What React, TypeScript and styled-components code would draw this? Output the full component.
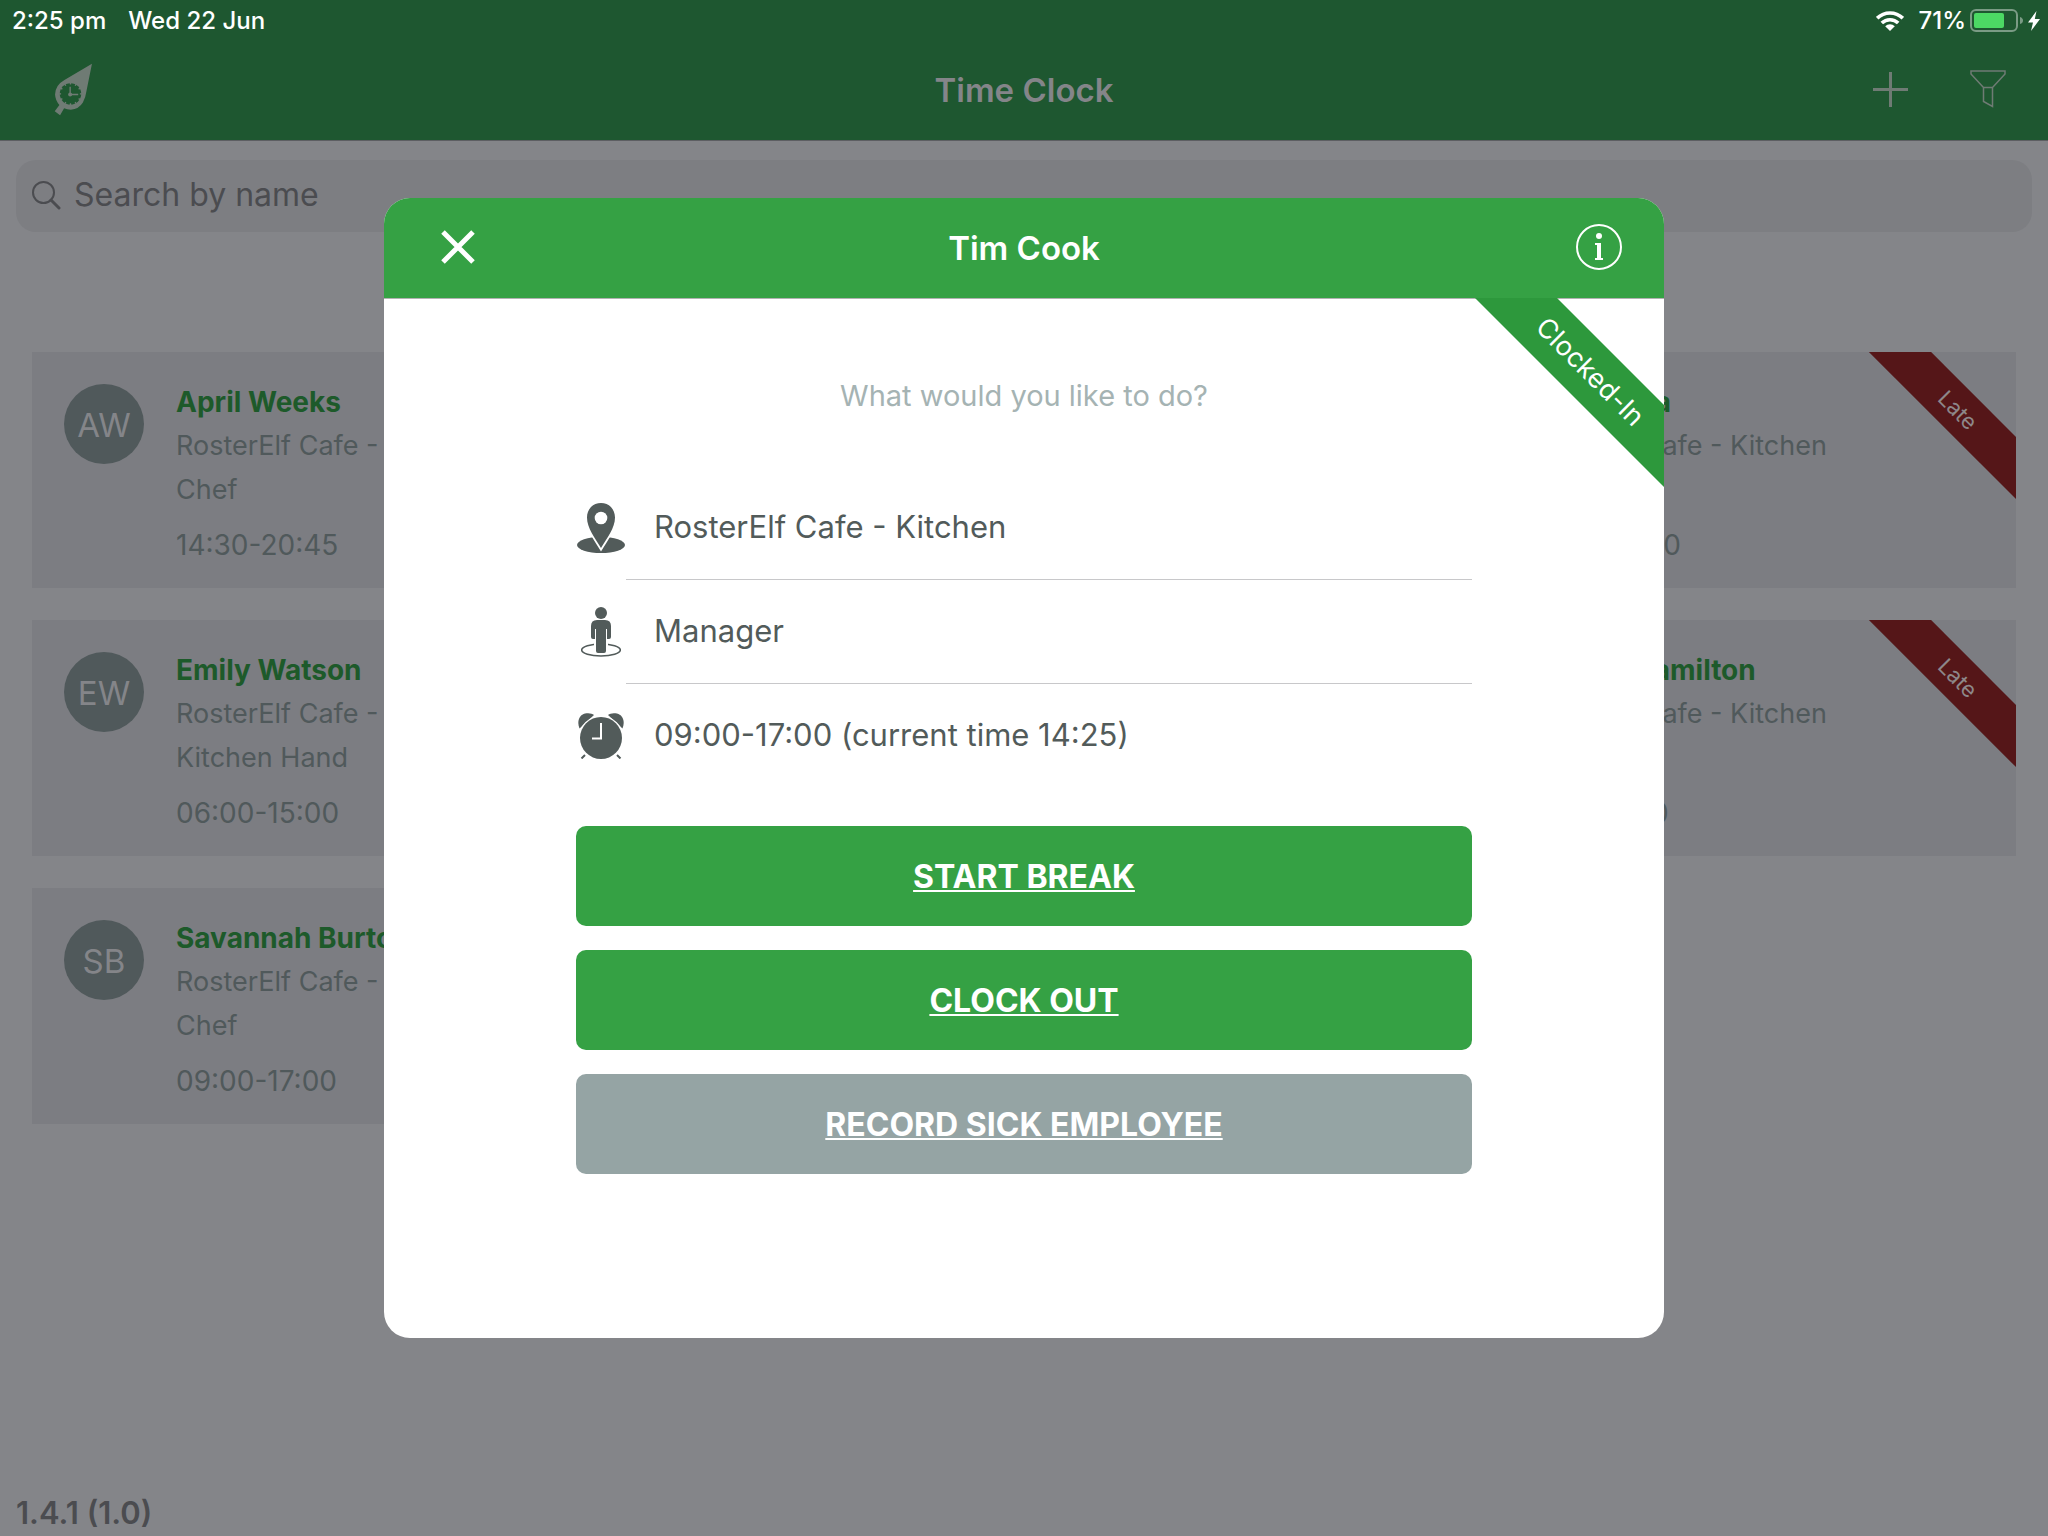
import React from 'react';
import styled, { createGlobalStyle } from 'styled-components';

const color = {
  header: '#1e5730',
  page: '#848589',
  search: '#7d7e82',
  card: '#7c7d82',
  slate: '#50595b',
  dimGreen: '#1d5a2a',
  dimText: '#4b4c50',
  dimWhite: '#848589',
  late: '#551618',
  green: '#35a144',
  ribbon: '#2d983c',
  grey: '#95a4a4',
  ink: '#525b5a',
};

const GlobalStyle = createGlobalStyle`
  *, *::before, *::after { box-sizing: border-box; }
  body {
    margin: 0;
    background: ${color.page};
    font-family: Inter, "Liberation Sans", sans-serif;
  }
  h1, h2, h3, p, ul, dl { margin: 0; padding: 0; }
  button, input { font: inherit; color: inherit; border: 0; padding: 0; background: none; }
  button { cursor: pointer; }
  svg { display: block; flex: none; }
`;

const Page = styled.div`
  min-height: 100vh;
  display: flex;
  flex-direction: column;
`;

const TopBar = styled.header`
  background: ${color.header};
  border-bottom: 1px solid #5d5e62;
`;

const StatusBar = styled.div`
  height: 40px;
  padding: 2px 8px 0 12px;
  display: flex;
  align-items: center;
  justify-content: space-between;
  color: #fff;
  font-size: 24px;
  font-weight: 500;
  line-height: 32px;
`;

const StatusGroup = styled.div<{ $gap: number }>`
  display: flex;
  align-items: center;
  gap: ${(p) => p.$gap}px;
`;

const NavBar = styled.div`
  height: 100px;
  padding: 0 42px;
  display: grid;
  grid-template-columns: 1fr auto 1fr;
  align-items: center;
`;

const AppNav = styled(NavBar)`
  color: #6f7b74;
`;

const DialogNav = styled(NavBar)`
  background: ${color.green};
  color: #fff;
`;

const NavStart = styled.div<{ $inset: number }>`
  padding: 0 0 2px ${(p) => p.$inset}px;
  display: flex;
`;

const NavEnd = styled.div`
  padding-bottom: 2px;
  display: flex;
  justify-content: flex-end;
  align-items: center;
  gap: 62px;
`;

const IconButton = styled.button`
  display: flex;
  align-items: center;
  justify-content: center;
`;

const Title = styled.h1<{ $color: string }>`
  font-size: 33px;
  line-height: 44px;
  font-weight: 600;
  color: ${(p) => p.$color};
`;

const Main = styled.main`
  flex: 1;
  display: flex;
  flex-direction: column;
`;

const SearchBox = styled.label`
  margin: 19px 16px 0;
  height: 72px;
  padding: 0 16px 2px;
  display: flex;
  align-items: center;
  gap: 13px;
  border-radius: 20px;
  background: ${color.search};
  color: ${color.dimText};
`;

const SearchInput = styled.input`
  flex: 1;
  font-size: 32px;
  line-height: 44px;
  outline: none;
  &::placeholder { color: ${color.dimText}; opacity: 1; }
`;

const Roster = styled.ul`
  list-style: none;
  margin-top: 120px;
  padding: 0 32px;
  display: grid;
  grid-template-columns: repeat(3, 1fr);
  gap: 32px;
`;

const Card = styled.li<{ $column: number }>`
  grid-column: ${(p) => p.$column};
  position: relative;
  overflow: hidden;
  display: flex;
  gap: 32px;
  padding: 28px 32px 21px;
  background: ${color.card};
  color: ${color.slate};
  font-size: 27px;
  line-height: 44px;
`;

const Avatar = styled.span`
  flex: none;
  width: 80px;
  height: 80px;
  margin-top: 4px;
  padding-top: 2px;
  display: flex;
  align-items: center;
  justify-content: center;
  border-radius: 50%;
  background: ${color.slate};
  color: ${color.dimWhite};
  font-size: 33px;
`;

const Name = styled.h3`
  font-size: 28px;
  font-weight: 700;
  color: ${color.dimGreen};
`;

const Hours = styled.p`
  margin-top: 11px;
  font-size: 28px;
`;

/* A diagonal band over the top right corner, centred `$inset` px from both edges. */
const Ribbon = styled.span<{ $inset: number; $thick: number; $size: number; $bg: string; $fg: string }>`
  position: absolute;
  top: ${(p) => p.$inset - p.$thick / 2}px;
  right: ${(p) => p.$inset - 160}px;
  width: 320px;
  transform: rotate(45deg);
  text-align: center;
  line-height: ${(p) => p.$thick}px;
  font-size: ${(p) => p.$size}px;
  background: ${(p) => p.$bg};
  color: ${(p) => p.$fg};
`;

const Version = styled.footer`
  padding: 0 16px 3px;
  font-size: 31px;
  line-height: 40px;
  font-weight: 600;
  color: ${color.dimText};
`;

const Overlay = styled.div`
  position: fixed;
  inset: 0;
  display: flex;
  align-items: center;
  justify-content: center;
`;

const Dialog = styled.section`
  width: 100%;
  max-width: 1280px;
  border-radius: 26px;
  overflow: hidden;
  background: #fff;
`;

const DialogBody = styled.div`
  position: relative;
  overflow: hidden;
  padding: 78px 15% 164px;
  box-shadow: inset 0 1px 0 #b2b2b2;
`;

const Prompt = styled.p`
  text-align: center;
  font-size: 29px;
  line-height: 40px;
  color: #a5b3b3;
`;

const Details = styled.ul`
  list-style: none;
  margin: 60px 0 38px;
  color: ${color.ink};
`;

const Detail = styled.li`
  display: flex;
  align-items: center;
`;

const DetailIcon = styled.span`
  width: 50px;
  display: flex;
  justify-content: center;
`;

const DetailText = styled.span`
  flex: 1;
  height: 104px;
  padding: 0 0 3px 28px;
  display: flex;
  align-items: center;
  font-size: 31px;
  border-bottom: 1px solid #c8c8ca;
  ${Detail}:last-child & { border-bottom-color: transparent; }
`;

const Actions = styled.div`
  display: flex;
  flex-direction: column;
  gap: 24px;
`;

const Action = styled.button<{ $bg: string }>`
  height: 100px;
  border-radius: 10px;
  background: ${(p) => p.$bg};
  color: #fff;
  font-size: 32px;
  font-weight: 700;
  text-decoration: underline;
  text-decoration-thickness: 2px;
  text-underline-offset: 2px;
  text-decoration-skip-ink: none;
`;

const WifiIcon = () => (
  <svg width="28" height="20" viewBox="0 0 28 20" fill="none" stroke="#fff" strokeWidth="3.6">
    <path d="M1.2 7.2A18.4 18.4 0 0 1 26.8 7.2" />
    <path d="M5.8 12A11.8 11.8 0 0 1 22.2 12" />
    <path d="M14 20L9.2 15.3A6.8 6.8 0 0 1 18.8 15.3Z" fill="#fff" stroke="none" />
  </svg>
);

const BatteryIcon = () => (
  <svg width="54" height="24" viewBox="0 0 54 24">
    <rect x="1" y="1" width="46" height="21" rx="5" fill="none" stroke="#7b9b85" strokeWidth="2" />
    <rect x="4" y="4" width="30" height="15" rx="2" fill="#4cd964" />
    <path d="M50 8Q53 9 53 11.500Q53 14 50 15Z" fill="#7b9b85" />
  </svg>
);

const BoltIcon = () => (
  <svg width="12" height="20" viewBox="0 0 12 20" fill="#fff">
    <path d="M8.500 0L0 11.500H5L3 20L12 8H6.800Z" />
  </svg>
);

const LeafClockIcon = () => (
  <svg width="39" height="53" viewBox="162 190 116 158">
    <path
      fill="currentColor"
      d="M275 192L193 241Q166 256 165 284Q166 302 178 315L164 334L180 346L192 325Q201 329 212 329Q236 328 248 308Q256 294 259 272Z"
    />
    <circle cx="211" cy="282" r="32" fill={color.header} />
    <g stroke="currentColor" strokeWidth="4">
      {[0, 30, 60, 90, 120, 150, 180, 210, 240, 270, 300, 330].map((a) => (
        <path key={a} d="M211 248V254" transform={`rotate(${a} 211 282)`} />
      ))}
      <path d="M210 261V284M208 284H234" />
    </g>
    <circle cx="210" cy="284" r="6" fill="currentColor" />
  </svg>
);

const PlusIcon = () => (
  <svg width="35" height="35" viewBox="0 0 35 35" stroke="currentColor" strokeWidth="3">
    <path d="M17.500 0V35M0 17.500H35" />
  </svg>
);

const FilterIcon = () => (
  <svg width="36" height="38" viewBox="0 0 36 38" fill="none" stroke="currentColor" strokeWidth="1.500">
    <path d="M1 1H35V4L22.500 17.500V36.500L13.500 31.500V17.500L1 4ZM13.500 17.500H22.500" />
  </svg>
);

const SearchIcon = () => (
  <svg width="29" height="29" viewBox="0 0 29 29" fill="none" stroke="currentColor">
    <circle cx="11.500" cy="11.500" r="10.500" strokeWidth="2" />
    <path d="M19 19L27 27" strokeWidth="3" strokeLinecap="round" />
  </svg>
);

const CloseIcon = () => (
  <svg width="34" height="34" viewBox="0 0 34 34" stroke="currentColor" strokeWidth="5">
    <path d="M2 2L32 32M32 2L2 32" />
  </svg>
);

const InfoIcon = () => (
  <svg width="46" height="46" viewBox="0 0 46 46">
    <circle cx="23" cy="23" r="22" fill="none" stroke="currentColor" strokeWidth="2" />
    <circle cx="23" cy="12" r="3" fill="currentColor" />
    <path d="M19 19H25V34H27V36H19V34H21V21H19Z" fill="currentColor" />
  </svg>
);

const PinIcon = () => (
  <svg width="48" height="50" viewBox="0 0 48 50" fill="currentColor">
    <ellipse cx="24" cy="42" rx="24" ry="8" />
    <path
      d="M24 0C16 0 10 6 10 14.500C10 25 18 35 24 45C30 35 38 25 38 14.500C38 6 32 0 24 0Z"
      stroke="#fff"
      strokeWidth="3.600"
      paintOrder="stroke"
    />
    <circle cx="24" cy="15" r="6.300" fill="#fff" />
  </svg>
);

const PersonIcon = () => (
  <svg width="40" height="50" viewBox="0 0 40 50" fill="currentColor">
    <ellipse cx="20" cy="43" rx="19.300" ry="6" fill="none" stroke="currentColor" strokeWidth="1.600" />
    <path d="M13 34H27V44H13Z" fill="#fff" />
    <circle cx="20" cy="6" r="6" />
    <path d="M16 13H24Q30 13 30 19V30Q30 32 28 32H26V22H25V44Q25 46 23 46H17Q15 46 15 44V22H14V32H12Q10 32 10 30V19Q10 13 16 13Z" />
  </svg>
);

const AlarmIcon = () => (
  <svg width="46" height="46" viewBox="0 0 46 46" fill="currentColor">
    <path d="M1.500 15.500C-1.500 8 1.500 2 7 .6C11 -.3 14 .6 16 2Z" />
    <path d="M44.500 15.500C47.500 8 44.500 2 39 .6C35 -.3 32 .6 30 2Z" />
    <path d="M7 42L3.500 45.500M39 42L42.500 45.500" stroke="currentColor" strokeWidth="2" />
    <circle cx="23" cy="25" r="21" stroke="#fff" strokeWidth="2.600" paintOrder="stroke" />
    <path d="M23 10V25.500H14" fill="none" stroke="#fff" strokeWidth="2" />
  </svg>
);

interface Shift {
  name: string;
  initials: string;
  role: string;
  hours: string;
  column: number;
  late?: boolean;
}

const shifts: Shift[] = [
  { name: 'April Weeks', initials: 'AW', role: 'Chef', hours: '14:30-20:45', column: 1 },
  { name: 'Maria Silva', initials: 'MS', role: 'Chef', hours: '09:00-17:00', column: 3, late: true },
  { name: 'Emily Watson', initials: 'EW', role: 'Kitchen Hand', hours: '06:00-15:00', column: 1 },
  { name: 'Charles Hamilton', initials: 'CH', role: 'Chef', hours: '11:00-17:00', column: 3, late: true },
  { name: 'Savannah Burton', initials: 'SB', role: 'Chef', hours: '09:00-17:00', column: 1 },
];

const ShiftCard = ({ shift }: { shift: Shift }) => (
  <Card $column={shift.column}>
    <Avatar>{shift.initials}</Avatar>
    <div>
      <Name>{shift.name}</Name>
      <p>RosterElf Cafe - Kitchen</p>
      <p>{shift.role}</p>
      <Hours>{shift.hours}</Hours>
    </div>
    {shift.late && (
      <Ribbon $inset={58} $thick={44} $size={22} $bg={color.late} $fg="#8d8789">
        Late
      </Ribbon>
    )}
  </Card>
);

export default function App() {
  return (
    <Page>
      <GlobalStyle />
      <TopBar>
        <StatusBar>
          <StatusGroup $gap={22}>
            <span>2:25 pm</span>
            <span>Wed 22 Jun</span>
          </StatusGroup>
          <StatusGroup $gap={4}>
            <StatusGroup $gap={14}>
              <WifiIcon />
              <span>71%</span>
            </StatusGroup>
            <BatteryIcon />
            <BoltIcon />
          </StatusGroup>
        </StatusBar>
        <AppNav>
          <NavStart $inset={12}>
            <IconButton aria-label="Home">
              <LeafClockIcon />
            </IconButton>
          </NavStart>
          <Title $color={color.dimWhite}>Time Clock</Title>
          <NavEnd>
            <IconButton aria-label="Add">
              <PlusIcon />
            </IconButton>
            <IconButton aria-label="Filter">
              <FilterIcon />
            </IconButton>
          </NavEnd>
        </AppNav>
      </TopBar>

      <Main>
        <SearchBox>
          <SearchIcon />
          <SearchInput type="text" placeholder="Search by name" aria-label="Search by name" />
        </SearchBox>
        <Roster>
          {shifts.map((shift) => (
            <ShiftCard key={shift.name} shift={shift} />
          ))}
        </Roster>
      </Main>
      <Version>1.4.1 (1.0)</Version>

      <Overlay>
        <Dialog role="dialog" aria-modal="true" aria-labelledby="dialog-title">
          <DialogNav>
            <NavStart $inset={15}>
              <IconButton aria-label="Close">
                <CloseIcon />
              </IconButton>
            </NavStart>
            <Title as="h2" id="dialog-title" $color="#fff">
              Tim Cook
            </Title>
            <NavEnd>
              <IconButton aria-label="Information">
                <InfoIcon />
              </IconButton>
            </NavEnd>
          </DialogNav>
          <DialogBody>
            <Ribbon $inset={74} $thick={58} $size={27} $bg={color.ribbon} $fg="#fff">
              Clocked-In
            </Ribbon>
            <Prompt>What would you like to do?</Prompt>
            <Details>
              <Detail>
                <DetailIcon>
                  <PinIcon />
                </DetailIcon>
                <DetailText>RosterElf Cafe - Kitchen</DetailText>
              </Detail>
              <Detail>
                <DetailIcon>
                  <PersonIcon />
                </DetailIcon>
                <DetailText>Manager</DetailText>
              </Detail>
              <Detail>
                <DetailIcon>
                  <AlarmIcon />
                </DetailIcon>
                <DetailText>09:00-17:00 (current time 14:25)</DetailText>
              </Detail>
            </Details>
            <Actions>
              <Action $bg={color.green}>START BREAK</Action>
              <Action $bg={color.green}>CLOCK OUT</Action>
              <Action $bg={color.grey}>RECORD SICK EMPLOYEE</Action>
            </Actions>
          </DialogBody>
        </Dialog>
      </Overlay>
    </Page>
  );
}
